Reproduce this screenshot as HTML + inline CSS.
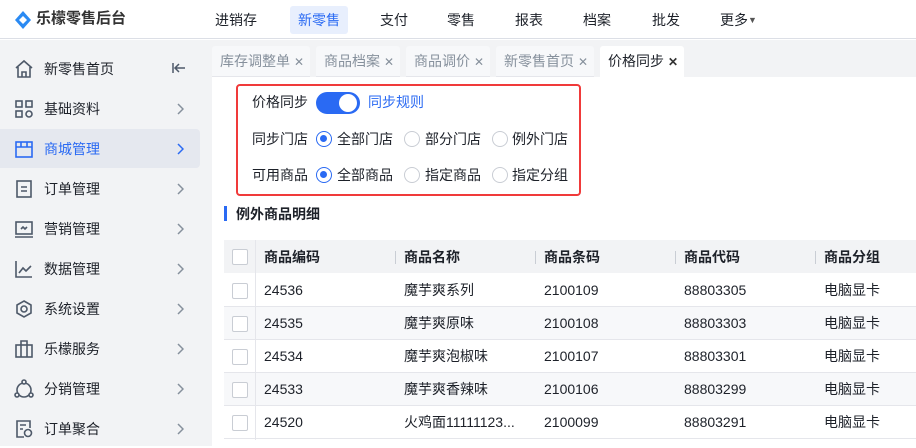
<!DOCTYPE html>
<html><head><meta charset="utf-8"><style>
*{box-sizing:border-box;margin:0;padding:0}
body{width:916px;height:446px;overflow:hidden;font-family:"Liberation Sans","Noto Sans CJK SC",sans-serif;font-size:14px;line-height:20px;color:#1d2129;background:#fff;position:relative}
.a{position:absolute}
.hdr{left:0;top:0;width:916px;height:39px;background:#fff;border-bottom:1px solid #dcdfe6}
.nav{top:10px;font-size:14px;color:#1d2129}
.side{left:0;top:40px;width:212px;height:406px;background:#f2f3f5}
.si{left:0;width:200px;height:39px;font-size:14px}
.si .t{position:absolute;left:44px;top:10px}
.si svg.ic{position:absolute;left:14px;top:10px}
.si svg.ch{position:absolute;left:176px;top:14px}
.tabs{left:212px;top:40px;width:704px;height:37px;background:#f2f3f5}
.tab{top:46px;height:31px;background:#f7f8fa;border-bottom:1px solid #e5e6eb;color:#86909c;font-size:14px;padding:5px 0 0 8px;border-radius:3px 3px 0 0}
.tab b{font-weight:normal;font-size:12px;margin-left:4px}
.rad{width:16px;height:16px;border:1px solid #c9cdd4;border-radius:50%;background:#fff}
.rad.on{border-color:#2a6af3;border-width:1.5px}
.rad.on::after{content:"";position:absolute;left:3px;top:3px;width:7px;height:7px;border-radius:50%;background:#2a6af3}
.lbl{font-size:14px;color:#1d2129}
.th{top:240px;left:224px;width:692px;height:33px;background:#f2f3f5}
.row{left:224px;width:692px;height:33px;border-bottom:1px solid #e5e6eb}
.cell{position:absolute;top:6px;font-size:14px;line-height:20px;height:20px;display:block}
.cb{position:absolute;left:8px;top:9px;width:16px;height:16px;border:1.5px solid #c9cdd4;border-radius:2px;background:#fff}
.sep{position:absolute;top:11px;width:1px;height:13px;background:#c9cdd4}
</style></head><body>
<div class="a hdr"></div>
<svg class="a" style="left:14px;top:10px" width="18" height="20" viewBox="0 0 18 20"><path d="M9 1 L17 10 L9 19 L1 10Z" fill="#2a8af3"/><path d="M9 6 L13 10 L9 14 L5 10Z" fill="#fff"/></svg>
<div class="a" style="left:36px;top:9px;font-size:15px;font-weight:bold;color:#333">乐檬零售后台</div>
<div class="a" style="left:290px;top:6px;width:58px;height:28px;background:#e8effd;border-radius:3px"></div>
<div class="a nav" style="left:215px">进销存</div>
<div class="a nav" style="left:298px;color:#2a6af3">新零售</div>
<div class="a nav" style="left:380px">支付</div>
<div class="a nav" style="left:447px">零售</div>
<div class="a nav" style="left:515px">报表</div>
<div class="a nav" style="left:583px">档案</div>
<div class="a nav" style="left:652px">批发</div>
<div class="a nav" style="left:720px">更多<span style="font-size:9px;color:#555;vertical-align:2px">▼</span></div>

<div class="a side"></div>
<div class="a" style="left:0;top:129px;width:200px;height:39px;background:#e5e8ef;border-radius:0 4px 4px 0"></div>
<div class="a si" style="top:49px"><svg class="ic" width="20" height="20" viewBox="0 0 20 20" fill="none" stroke="#4e5969" stroke-width="1.6"><path d="M2 9 L10 2 L18 9 M4 8 V18 H16 V8 M8 18 V13 H12 V18"/></svg><span class="t">新零售首页</span><svg class="ch" style="left:172px;top:13px" width="14" height="12" viewBox="0 0 14 12" fill="none" stroke="#4e5969" stroke-width="1.5"><path d="M13 6 H3 M7 2 L3 6 L7 10 M1 1 V11"/></svg></div>
<div class="a si" style="top:89px"><svg class="ic" width="20" height="20" viewBox="0 0 20 20" fill="none" stroke="#4e5969" stroke-width="1.6"><rect x="2" y="2" width="6" height="6"/><rect x="12" y="2" width="6" height="6"/><rect x="2" y="12" width="6" height="6"/><circle cx="15" cy="15" r="3"/></svg><span class="t">基础资料</span><svg class="ch" width="8" height="12" viewBox="0 0 8 12" fill="none" stroke="#86909c" stroke-width="1.5"><path d="M2 1 L7 6 L2 11"/></svg></div>
<div class="a si" style="top:129px;color:#2a6af3"><svg class="ic" width="20" height="20" viewBox="0 0 20 20" fill="none" stroke="#2a6af3" stroke-width="1.6"><rect x="2" y="3" width="16" height="15"/><path d="M2 8 H18 M7 3 V8 M13 3 V8"/></svg><span class="t">商城管理</span><svg class="ch" width="8" height="12" viewBox="0 0 8 12" fill="none" stroke="#2a6af3" stroke-width="1.5"><path d="M2 1 L7 6 L2 11"/></svg></div>
<div class="a si" style="top:169px"><svg class="ic" width="20" height="20" viewBox="0 0 20 20" fill="none" stroke="#4e5969" stroke-width="1.6"><rect x="3" y="2" width="14" height="16"/><path d="M7 8 H13 M7 12 H13"/></svg><span class="t">订单管理</span><svg class="ch" width="8" height="12" viewBox="0 0 8 12" fill="none" stroke="#86909c" stroke-width="1.5"><path d="M2 1 L7 6 L2 11"/></svg></div>
<div class="a si" style="top:209px"><svg class="ic" width="20" height="20" viewBox="0 0 20 20" fill="none" stroke="#4e5969" stroke-width="1.6"><rect x="2" y="3" width="16" height="12"/><path d="M1 18 H19 M7 10 L9 8 L11 10 L13 8"/></svg><span class="t">营销管理</span><svg class="ch" width="8" height="12" viewBox="0 0 8 12" fill="none" stroke="#86909c" stroke-width="1.5"><path d="M2 1 L7 6 L2 11"/></svg></div>
<div class="a si" style="top:249px"><svg class="ic" width="20" height="20" viewBox="0 0 20 20" fill="none" stroke="#4e5969" stroke-width="1.6"><path d="M2 2 V18 H18 M5 14 L9 9 L12 12 L17 7"/></svg><span class="t">数据管理</span><svg class="ch" width="8" height="12" viewBox="0 0 8 12" fill="none" stroke="#86909c" stroke-width="1.5"><path d="M2 1 L7 6 L2 11"/></svg></div>
<div class="a si" style="top:289px"><svg class="ic" width="20" height="20" viewBox="0 0 20 20" fill="none" stroke="#4e5969" stroke-width="1.6"><path d="M10 2 L17 6 V14 L10 18 L3 14 V6Z"/><circle cx="10" cy="10" r="3"/></svg><span class="t">系统设置</span><svg class="ch" width="8" height="12" viewBox="0 0 8 12" fill="none" stroke="#86909c" stroke-width="1.5"><path d="M2 1 L7 6 L2 11"/></svg></div>
<div class="a si" style="top:329px"><svg class="ic" width="20" height="20" viewBox="0 0 20 20" fill="none" stroke="#4e5969" stroke-width="1.6"><rect x="2" y="6" width="16" height="12"/><path d="M7 6 V2 H13 V6 M7 6 V18 M13 6 V18"/></svg><span class="t">乐檬服务</span><svg class="ch" width="8" height="12" viewBox="0 0 8 12" fill="none" stroke="#86909c" stroke-width="1.5"><path d="M2 1 L7 6 L2 11"/></svg></div>
<div class="a si" style="top:369px"><svg class="ic" width="20" height="20" viewBox="0 0 20 20" fill="none" stroke="#4e5969" stroke-width="1.6"><circle cx="10" cy="11" r="7"/><circle cx="10" cy="3" r="2" fill="#f2f3f5"/><circle cx="3" cy="16" r="2" fill="#f2f3f5"/><circle cx="17" cy="16" r="2" fill="#f2f3f5"/></svg><span class="t">分销管理</span><svg class="ch" width="8" height="12" viewBox="0 0 8 12" fill="none" stroke="#86909c" stroke-width="1.5"><path d="M2 1 L7 6 L2 11"/></svg></div>
<div class="a si" style="top:409px"><svg class="ic" width="20" height="20" viewBox="0 0 20 20" fill="none" stroke="#4e5969" stroke-width="1.6"><path d="M10 18 H3 V2 H16 V9 M6 6 H12 M6 10 H9"/><circle cx="14" cy="14" r="3.5"/></svg><span class="t">订单聚合</span><svg class="ch" width="8" height="12" viewBox="0 0 8 12" fill="none" stroke="#86909c" stroke-width="1.5"><path d="M2 1 L7 6 L2 11"/></svg></div>

<div class="a tabs"></div>
<div class="a tab" style="left:212px;width:98px">库存调整单<b>✕</b></div>
<div class="a tab" style="left:316px;width:84px">商品档案<b>✕</b></div>
<div class="a tab" style="left:406px;width:84px">商品调价<b>✕</b></div>
<div class="a tab" style="left:496px;width:98px">新零售首页<b>✕</b></div>
<div class="a tab" style="left:600px;width:84px;background:#fff;color:#1d2129;border-bottom-color:#fff">价格同步<b style="font-weight:bold;color:#333">✕</b></div>

<div class="a" style="left:236px;top:84px;width:345px;height:112px;border:2px solid #f03a3a;border-radius:4px"></div>
<div class="a lbl" style="left:252px;top:92px">价格同步</div>
<div class="a" style="left:316px;top:92px;width:44px;height:22px;border-radius:11px;background:#2a6af3"></div>
<div class="a" style="left:339px;top:94px;width:18px;height:18px;border-radius:50%;background:#fff"></div>
<div class="a lbl" style="left:368px;top:92px;color:#2a6af3">同步规则</div>

<div class="a lbl" style="left:252px;top:129px">同步门店</div>
<div class="a rad on" style="left:316px;top:131px"></div><div class="a lbl" style="left:337px;top:129px">全部门店</div>
<div class="a rad" style="left:404px;top:131px"></div><div class="a lbl" style="left:425px;top:129px">部分门店</div>
<div class="a rad" style="left:492px;top:131px"></div><div class="a lbl" style="left:512px;top:129px">例外门店</div>

<div class="a lbl" style="left:252px;top:165px">可用商品</div>
<div class="a rad on" style="left:316px;top:167px"></div><div class="a lbl" style="left:337px;top:165px">全部商品</div>
<div class="a rad" style="left:404px;top:167px"></div><div class="a lbl" style="left:425px;top:165px">指定商品</div>
<div class="a rad" style="left:492px;top:167px"></div><div class="a lbl" style="left:512px;top:165px">指定分组</div>

<div class="a" style="left:224px;top:206px;width:3px;height:15px;background:#2a6af3"></div>
<div class="a" style="left:236px;top:204px;font-weight:bold;font-size:14px">例外商品明细</div>

<div class="a" style="left:255px;top:240px;width:1px;height:200px;background:#e5e6eb;z-index:2"></div>
<div class="a th"><div class="cb"></div>
<span class="cell" style="left:40px;font-weight:bold;top:7px">商品编码</span>
<span class="sep" style="left:171px"></span><span class="cell" style="left:180px;font-weight:bold;top:7px">商品名称</span>
<span class="sep" style="left:311px"></span><span class="cell" style="left:320px;font-weight:bold;top:7px">商品条码</span>
<span class="sep" style="left:451px"></span><span class="cell" style="left:460px;font-weight:bold;top:7px">商品代码</span>
<span class="sep" style="left:591px"></span><span class="cell" style="left:600px;font-weight:bold;top:7px">商品分组</span></div>

<div class="a row" style="top:274px"><div class="cb"></div><span class="cell" style="left:40px">24536</span><span class="cell" style="left:180px">魔芋爽系列</span><span class="cell" style="left:320px">2100109</span><span class="cell" style="left:460px">88803305</span><span class="cell" style="left:600px">电脑显卡</span></div>
<div class="a row" style="top:307px;background:#f7f8fa"><div class="cb"></div><span class="cell" style="left:40px">24535</span><span class="cell" style="left:180px">魔芋爽原味</span><span class="cell" style="left:320px">2100108</span><span class="cell" style="left:460px">88803303</span><span class="cell" style="left:600px">电脑显卡</span></div>
<div class="a row" style="top:340px"><div class="cb"></div><span class="cell" style="left:40px">24534</span><span class="cell" style="left:180px">魔芋爽泡椒味</span><span class="cell" style="left:320px">2100107</span><span class="cell" style="left:460px">88803301</span><span class="cell" style="left:600px">电脑显卡</span></div>
<div class="a row" style="top:373px;background:#f7f8fa"><div class="cb"></div><span class="cell" style="left:40px">24533</span><span class="cell" style="left:180px">魔芋爽香辣味</span><span class="cell" style="left:320px">2100106</span><span class="cell" style="left:460px">88803299</span><span class="cell" style="left:600px">电脑显卡</span></div>
<div class="a row" style="top:406px"><div class="cb"></div><span class="cell" style="left:40px">24520</span><span class="cell" style="left:180px">火鸡面11111123...</span><span class="cell" style="left:320px">2100099</span><span class="cell" style="left:460px">88803291</span><span class="cell" style="left:600px">电脑显卡</span></div>
</body></html>
